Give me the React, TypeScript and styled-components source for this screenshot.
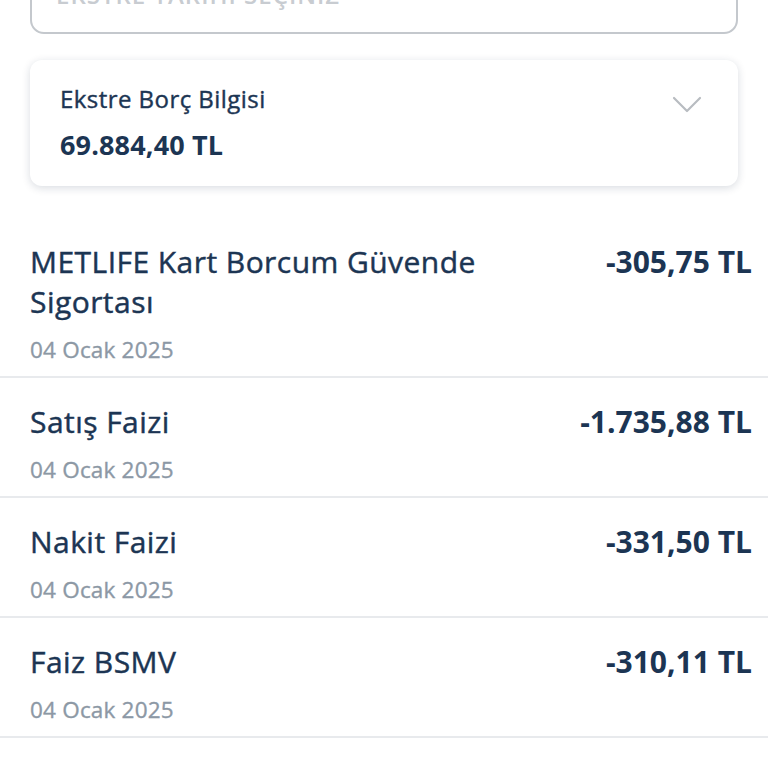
import React from 'react';
import styled, { createGlobalStyle } from 'styled-components';

const GlobalStyle = createGlobalStyle`
  html, body {
    margin: 0;
    padding: 0;
    background: #ffffff;
    font-family: "Open Sans", "Noto Sans", sans-serif;
    overflow: hidden;
  }
`;

const Page = styled.div`
  display: flex;
  flex-direction: column;
  width: 768px;
  height: 768px;
  overflow: hidden;
`;

const FilterCard = styled.div`
  margin: -40px 30px 0;
  height: 74px;
  box-sizing: border-box;
  border: 2px solid #c4c8cd;
  border-radius: 14px;
  padding: 18px 24px 0;
  color: #c8ccd1;
  font-size: 24px;
  line-height: 30px;
  font-weight: 600;
  letter-spacing: 1px;
  text-transform: uppercase;
  overflow: hidden;
`;

const InfoCard = styled.div`
  margin: 26px 30px 0;
  height: 126px;
  box-sizing: border-box;
  border-radius: 12px;
  background: #ffffff;
  box-shadow: 0 2px 8px rgba(20, 40, 70, 0.16);
  padding: 24px 30px 0;
  display: flex;
  justify-content: space-between;
  align-items: flex-start;
`;

const InfoText = styled.div`
  display: flex;
  flex-direction: column;
  gap: 15px;
`;

const InfoLabel = styled.div`
  font-size: 24px;
  line-height: 30px;
  letter-spacing: 0.45px;
  -webkit-text-stroke: 0.4px #1c3553;
  color: #1c3553;
`;

const InfoAmount = styled.div`
  font-size: 27px;
  line-height: 32px;
  font-weight: 700;
  letter-spacing: 0.15px;
  color: #1c3553;
`;

const Chevron = styled.svg`
  margin-top: 12px;
  margin-right: 6px;
  flex-shrink: 0;
`;

const List = styled.div`
  margin-top: 32px;
  display: flex;
  flex-direction: column;
`;

const Row = styled.div`
  display: flex;
  justify-content: space-between;
  align-items: flex-start;
  gap: 24px;
  padding: 24px 16px 11px 30px;
  border-bottom: 2px solid #e8eaed;
`;

const RowText = styled.div`
  display: flex;
  flex-direction: column;
  gap: 13px;
  max-width: 500px;
`;

const Title = styled.div`
  font-size: 30px;
  line-height: 40px;
  letter-spacing: 0.45px;
  -webkit-text-stroke: 0.45px #1c3553;
  color: #1c3553;
`;

const DateText = styled.div`
  font-size: 22.5px;
  line-height: 30px;
  letter-spacing: 0.2px;
  -webkit-text-stroke: 0.35px #8c98a5;
  color: #8c98a5;
`;

const Amount = styled.div`
  font-size: 30px;
  line-height: 40px;
  font-weight: 700;
  color: #1c3553;
  white-space: nowrap;
`;

interface ITransaction {
  title: string;
  date: string;
  amount: string;
}

const transactions: ITransaction[] = [
  { title: 'METLIFE Kart Borcum Güvende Sigortası', date: '04 Ocak 2025', amount: '-305,75 TL' },
  { title: 'Satış Faizi', date: '04 Ocak 2025', amount: '-1.735,88 TL' },
  { title: 'Nakit Faizi', date: '04 Ocak 2025', amount: '-331,50 TL' },
  { title: 'Faiz BSMV', date: '04 Ocak 2025', amount: '-310,11 TL' },
];

export default function App(): React.ReactElement {
  return (
    <Page>
      <GlobalStyle />
      <FilterCard>Ekstre Tarihi Seçiniz</FilterCard>
      <InfoCard>
        <InfoText>
          <InfoLabel>Ekstre Borç Bilgisi</InfoLabel>
          <InfoAmount>69.884,40 TL</InfoAmount>
        </InfoText>
        <Chevron width="30" height="18" viewBox="0 0 30 18">
          <polyline points="2,2 15,15 28,2" fill="none" stroke="#b8bcc1" strokeWidth="2.2" strokeLinecap="round" strokeLinejoin="round" />
        </Chevron>
      </InfoCard>
      <List>
        {transactions.map((item: ITransaction): React.ReactElement => (
          <Row key={item.title}>
            <RowText>
              <Title>{item.title}</Title>
              <DateText>{item.date}</DateText>
            </RowText>
            <Amount>{item.amount}</Amount>
          </Row>
        ))}
      </List>
    </Page>
  );
}
